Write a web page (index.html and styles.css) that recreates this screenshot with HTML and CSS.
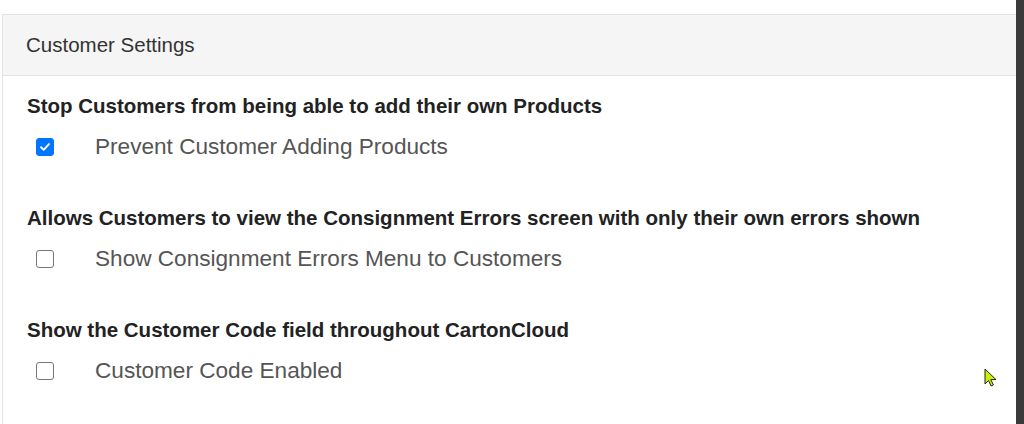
FILE: index.html
```html
<!DOCTYPE html>
<html lang="en">
<head>
    <meta charset="UTF-8">
    <title>Customer Settings</title>
    <link rel="stylesheet" href="styles.css">
</head>
<body>
    <div class="page">
        <div class="panel">
            <div class="panel-heading">Customer Settings</div>
            <div class="panel-body">
                <div class="setting">
                    <div class="setting-title">Stop Customers from being able to add their own Products</div>
                    <label class="check">
                        <span class="box checked">
                            <svg viewBox="0 0 16 16" width="14" height="14"><path d="M3.5 8.3l3 3 6-6.6" fill="none" stroke="#fff" stroke-width="2.2" stroke-linecap="round" stroke-linejoin="round"/></svg>
                        </span>
                        <span class="check-text">Prevent Customer Adding Products</span>
                    </label>
                </div>
                <div class="setting">
                    <div class="setting-title">Allows Customers to view the Consignment Errors screen with only their own errors shown</div>
                    <label class="check">
                        <span class="box"></span>
                        <span class="check-text">Show Consignment Errors Menu to Customers</span>
                    </label>
                </div>
                <div class="setting">
                    <div class="setting-title">Show the Customer Code field throughout CartonCloud</div>
                    <label class="check">
                        <span class="box"></span>
                        <span class="check-text">Customer Code Enabled</span>
                    </label>
                </div>
            </div>
        </div>
        <div class="scrollbar"></div>
    </div>

    <svg class="cursor" viewBox="0 0 14 20" width="14" height="20">
        <path d="M1 1v15l3.5-3.5 2.6 5.5 2.3-1.1-2.6-5.3H12z" fill="#c8f000" stroke="#222" stroke-width="1"/>
    </svg>
</body>
</html>
```

FILE: styles.css
```css
* {
    box-sizing: border-box;
    margin: 0;
    padding: 0;
}

body {
    font-family: 'Liberation Sans', Arial, sans-serif;
    background: #fff;
    width: 1024px;
    height: 424px;
    overflow: hidden;
}

.page {
    display: flex;
    height: 424px;
    padding-top: 14px;
    padding-left: 2px;
}

.panel {
    flex: 1;
    border: 1px solid #e3e3e3;
    border-right: none;
    border-bottom: none;
}

.panel-heading {
    background: #f5f5f5;
    border-bottom: 1px solid #e3e3e3;
    height: 61px;
    padding: 20px 23px 0;
    font-size: 20.5px;
    line-height: 20px;
    color: #333;
}

.panel-body {
    padding: 19px 24px 0;
}

.setting {
    margin-bottom: 48px;
}

.setting-title {
    font-weight: bold;
    font-size: 20.5px;
    color: #222;
    line-height: 22px;
}

.check {
    display: flex;
    align-items: center;
    margin-top: 18px;
    height: 24px;
}

.box {
    width: 18px;
    height: 18px;
    margin-left: 9px;
    border: 1.5px solid #767676;
    border-radius: 3px;
    background: #fff;
    display: flex;
    align-items: center;
    justify-content: center;
}

.box.checked {
    background: #0075ff;
    border-color: #0075ff;
}

.check-text {
    margin-left: 41px;
    font-size: 22.6px;
    color: #555;
}

.scrollbar {
    width: 8px;
    margin-top: -14px;
    background: #3a3a3a;
}

.cursor {
    position: absolute;
    left: 984px;
    top: 368px;
}
```
